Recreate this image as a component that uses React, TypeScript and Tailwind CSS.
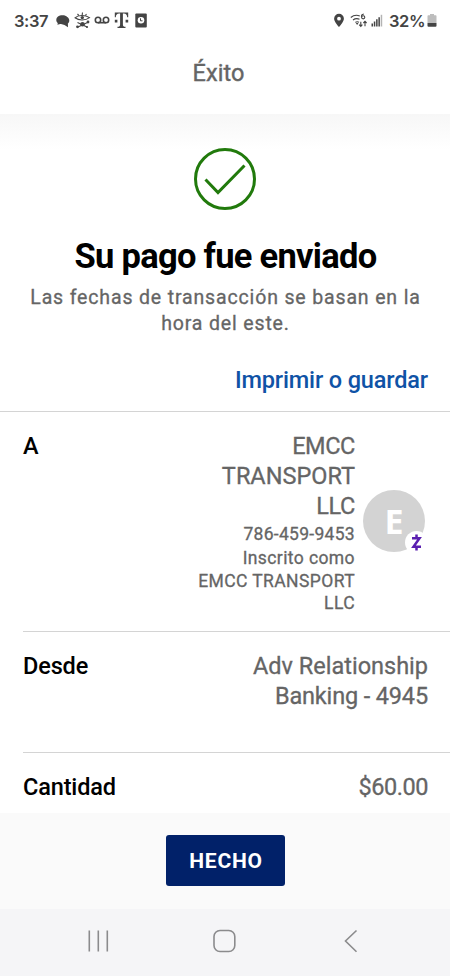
import type { ReactNode } from 'react'

interface RowProps {
    label: string
    className?: string
    children: ReactNode
}

const DetailRow = ({ label, className = '', children }: RowProps) => {
    return (
        <div
            className={`ml-[23px] flex justify-between border-b border-[#d4d4d4] pr-[22px] pt-[19px] text-[23.5px] leading-[30px] ${className}`}
        >
            <span className="font-medium tracking-[-0.15px] text-black">{label}</span>
            {children}
        </div>
    )
}

const StatusBar = () => {
    return (
        <div className="flex h-10 items-center justify-between pl-[14px] pr-[13px] pt-[2px] text-[#444]">
            <div className="flex items-center">
                <span className="w-[42px] font-['Inter'] text-[16.5px] font-semibold leading-5 tracking-[-0.4px]">
                    3:37
                </span>
                <svg className="h-5 w-[93px]" viewBox="0 0 93 20" fill="currentColor">
                    {/* chat bubbles */}
                    <path d="M6.5 4.2C2.8 4.2.3 6 .3 8.900c0 1.300.6 2.300 1.500 3L1.400 13.700l2.800-.8c2 .3 3 .2 4.200-.2 2.300-.7 3.800-2.100 3.800-4.100 0-2.500-2.300-4.400-5.700-4.400z" />
                    <path d="M9.500 5.500c2.200.3 3.800 1.800 3.800 4 0 1.300-.6 2.300-1.400 3l.1 3.800-3.500-2.400-3.500-1z" />
                    {/* eye over crossed bones */}
                    <g fill="none" stroke="currentColor" strokeWidth="1.100">
                        <path d="M19 6.800C22 3.800 29 3.600 33.500 6.600c-4 3-10.500 3.200-14.500.2z" />
                        <path d="M21.500 3l1.500 1.600M26.500 1.500l-.3 2.500M30.500 3l-1.200 1.500M21.500 11.500l9.500 4.500M32 11.200l-10 4.800" />
                    </g>
                    <circle cx="26.300" cy="6.600" r="1.700" />
                    <circle cx="21.500" cy="15.800" r="1.400" />
                    <circle cx="32" cy="11" r="1.400" />
                    <circle cx="31" cy="16" r="1.100" />
                    <circle cx="26.500" cy="13.300" r="2.300" />
                    {/* voicemail */}
                    <g fill="none" stroke="currentColor" strokeWidth="1.600">
                        <circle cx="42" cy="9" r="2.700" />
                        <circle cx="50" cy="9" r="2.700" />
                        <path d="M42 11.700h8" />
                    </g>
                    {/* carrier mark */}
                    <path d="M58.800 1.500h13.400v4.700h-1c-.2-2.500-1.200-3.500-3.300-3.600h-1v10.800c0 1.700.7 2.300 2.600 2.400v1.200h-8v-1.200c1.900-.1 2.600-.7 2.600-2.400V2.600h-1c-2.100.1-3.100 1.100-3.300 3.600h-1zM58.800 8.800h2.600v2.700h-2.600zM69.600 8.800h2.600v2.700h-2.600z" />
                    <rect x="79.300" y="2.500" width="11.500" height="14" rx="1" />
                    <circle cx="85" cy="9.300" r="3.300" fill="#fff" />
                    <path d="M84.500 7.300v2.500h2" fill="none" stroke="currentColor" />
                </svg>
            </div>
            <div className="flex items-center">
                <svg className="h-5 w-[56px]" viewBox="0 0 56 20" fill="currentColor">
                    <path
                        fillRule="evenodd"
                        d="M5 2.800A4.900 4.900 0 0 0 .1 7.700C.1 10.800 5 16 5 16s4.900-5.200 4.900-8.300A4.900 4.900 0 0 0 5 2.800zm0 3a1.900 1.900 0 1 1 0 3.800 1.900 1.900 0 0 1 0-3.800z"
                    />
                    <g fill="none" stroke="currentColor" strokeWidth="1.100">
                        <path d="M16.800 6.500c2.500-2.200 6-2.700 9-1.600M19 9c1.800-1.300 4.300-1.700 6.500-.7M21.300 11.400c1.200-.8 2.500-.8 3.700-.2" />
                        <path d="M29.800 3c-1.800.3-2.500 1.500-2.300 2.800M26.800 10.700v4.500M25.200 13.700l1.600 1.700 1.600-1.700M31 15.200v-4.700M29.400 12l1.600-1.700 1.600 1.700" />
                        <circle cx="29.200" cy="6.300" r="1.600" />
                    </g>
                    <path d="M21.800 12h2.700l-1.400 2z" />
                    <path d="M37.500 12.500H39v3h-1.500zM39.800 10.500h1.500v5h-1.500zM42.100 8.300h1.500v7.200h-1.500zM44.400 6.300h1.500v9.200h-1.500z" />
                    <path d="M46.700 3.800h1.500v11.700h-1.500z" opacity=".4" />
                </svg>
                <span className="-ml-px w-[38px] font-['Inter'] text-[16.5px] font-semibold leading-5 tracking-[-0.4px]">
                    32%
                </span>
                <svg className="h-5 w-[10px]" viewBox="0 0 10 20">
                    <path d="M3 3h4v1.200h1.500c.6 0 1 .4 1 1V12h-9V5.200c0-.6.400-1 1-1H3z" fill="#bdbdbd" />
                    <path d="M.5 12h9v2.800a1 1 0 0 1-1 1h-7a1 1 0 0 1-1-1z" fill="#444" />
                </svg>
            </div>
        </div>
    )
}

const Avatar = () => {
    return (
        <div className="relative flex size-[62px] items-center justify-center rounded-full bg-[#d3d3d3]">
            <span className="font-['Open_Sans'] text-[34px] font-bold leading-none text-white">E</span>
            <span className="absolute left-[42px] top-[41px] flex size-[23px] items-center justify-center rounded-full bg-white">
                <svg className="h-[17px] w-[11px]" viewBox="0 0 11 17" fill="none" stroke="#5a1fb0" strokeWidth="2.500">
                    <path d="M1 4.200h7.500L2.500 12.700H10M5.500 .5v3.500M5.500 13v3.500" />
                </svg>
            </span>
        </div>
    )
}

const NavigationBar = () => {
    return (
        <div className="h-[67px] bg-[#f5f5f7]">
            <svg className="h-[67px] w-full" viewBox="0 0 450 67" fill="none" stroke="#8b8b8d" strokeWidth="1.600">
                <path d="M89.300 21.500v21M98.300 21.500v21M107.300 21.500v21" />
                <rect x="214" y="21.500" width="20.800" height="21" rx="6" />
                <path d="M356.500 21.500L345.500 32l11 10.700" />
            </svg>
        </div>
    )
}

export default function App() {
    return (
        <div className="flex h-[976px] w-[450px] flex-col overflow-hidden bg-white font-['Roboto',sans-serif] text-[#656565]">
            <StatusBar />
            <header className="flex h-[74px] justify-center pr-[13px] pt-[18px] text-[23.5px] leading-[30px]">
                <h1 className="tracking-[0.1px] [-webkit-text-stroke:0.4px]">Éxito</h1>
            </header>

            <main className="h-[699px] overflow-hidden">
                <section className="h-[298px] border-b border-[#d4d4d4] bg-linear-to-b from-[#f7f7f7] to-white to-[36px] pt-[34px] text-center">
                    <svg className="mx-auto size-[62px]" viewBox="0 0 62 62" fill="none" stroke="#217a0c" strokeWidth="3">
                        <circle cx="31" cy="31" r="29.500" />
                        <path d="M11.500 31.500L24 44.500 50.500 17.500" />
                    </svg>
                    <h2 className="mt-[26px] pl-px text-[34.5px] font-bold leading-10 tracking-[-0.72px] text-black">
                        Su pago fue enviado
                    </h2>
                    <p className="mt-[9px] pl-px text-[19.5px] leading-[26px] tracking-[0.85px] [-webkit-text-stroke:0.3px]">
                        Las fechas de transacción se basan en la
                        <br />
                        hora del este.
                    </p>
                    <p className="mt-[28px] pr-[22px] text-right text-[23.5px] font-medium leading-[30px] tracking-[-0.15px] text-[#0f53a6]">
                        Imprimir o guardar
                    </p>
                </section>

                <DetailRow label="A" className="h-[220px]">
                    <div className="flex gap-2 [-webkit-text-stroke:0.3px]">
                        <div className="text-right">
                            <div>
                                <span className="tracking-[-0.4px]">EMCC</span>
                                <br />
                                TRANSPORT
                                <br />
                                <span className="tracking-[-0.4px]">LLC</span>
                            </div>
                            <div className="text-[17.5px] leading-[26px] tracking-[0.3px]">786-459-9453</div>
                            <div className="text-[17.5px] leading-[22.5px] tracking-[0.4px]">
                                Inscrito como
                                <br />
                                EMCC TRANSPORT
                                <br />
                                LLC
                            </div>
                        </div>
                        <div className="-mr-[16px] w-[81px] pt-[59px] [-webkit-text-stroke:0]">
                            <Avatar />
                        </div>
                    </div>
                </DetailRow>
                <DetailRow label="Desde" className="h-[121px]">
                    <div className="text-right [-webkit-text-stroke:0.3px]">
                        Adv Relationship
                        <br />
                        <span className="tracking-[-0.15px]">Banking - 4945</span>
                    </div>
                </DetailRow>
                <DetailRow label="Cantidad" className="h-[80px]">
                    <span className="tracking-[-0.45px] [-webkit-text-stroke:0.3px]">$60.00</span>
                </DetailRow>
            </main>

            <footer className="flex h-[96px] justify-center bg-[#fafafa] pt-[22px]">
                <button className="h-[51px] w-[119px] rounded-[3px] bg-[#012169] pl-[2px] pt-[2px] text-[21px] font-bold tracking-[0.8px] text-white">
                    HECHO
                </button>
            </footer>
            <NavigationBar />
        </div>
    )
}
